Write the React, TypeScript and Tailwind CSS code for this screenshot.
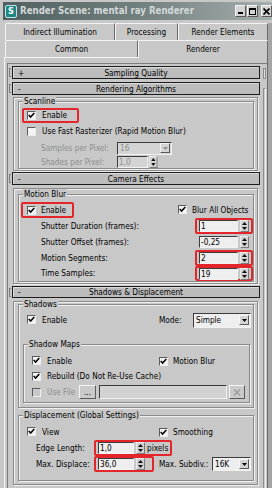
import React from 'react';

const sunken =
  'border border-t-[#3c3c3c] border-l-[#3c3c3c] border-r-[#f2f2f2] border-b-[#f2f2f2]';
const raised =
  'border border-t-[#f4f4f4] border-l-[#f4f4f4] border-r-[#5a5a5a] border-b-[#5a5a5a]';

function CheckBox({ checked = true, disabled = false }: { checked?: boolean; disabled?: boolean }) {
  return (
    <span
      className={`flex h-[9px] w-[9px] shrink-0 items-center justify-center border border-t-[#5c5c5c] border-l-[#5c5c5c] border-r-[#eeeeee] border-b-[#eeeeee] ${
        disabled ? 'bg-[#c8c8c8]' : 'bg-[#f3f3f3]'
      }`}
    >
      {checked && (
        <svg width="7" height="7" viewBox="0 0 7 7">
          <path d="M0.7 3.1 L2.6 5.1 L6.3 1.1" stroke="#000" strokeWidth="1.5" fill="none" />
        </svg>
      )}
    </span>
  );
}

function SpinArrows() {
  return (
    <span className="ml-[2px] flex h-[12px] w-[9px] shrink-0 flex-col items-center justify-center gap-[2px] border border-t-[#ececec] border-l-[#ececec] border-r-[#7a7a7a] border-b-[#7a7a7a] bg-[#d2d2d2]">
      <svg width="5" height="3" viewBox="0 0 5 3">
        <path d="M0 3 L2.5 0 L5 3Z" fill="#111" />
      </svg>
      <svg width="5" height="3" viewBox="0 0 5 3">
        <path d="M0 0 L5 0 L2.5 3Z" fill="#111" />
      </svg>
    </span>
  );
}

function Field({ value, className = '', disabled = false }: { value: string; className?: string; disabled?: boolean }) {
  return (
    <span
      className={`flex h-[12px] shrink-0 items-center pl-[1px] leading-[10px] ${sunken} ${
        disabled ? 'bg-[#d4d4d4] text-[#8e8e8e]' : 'bg-[#eeeeee]'
      } ${className}`}
    >
      {value}
    </span>
  );
}

function Dropdown({ value, className = '', disabled = false }: { value: string; className?: string; disabled?: boolean }) {
  return (
    <span
      className={`flex shrink-0 items-center ${sunken} ${disabled ? 'bg-[#d4d4d4] text-[#8e8e8e]' : 'bg-[#eeeeee]'} ${className}`}
    >
      <span className="flex-1 pl-[2px] leading-[10px]">{value}</span>
      <span className={`mr-[1px] flex h-[10px] w-[10px] items-center justify-center bg-[#d4d4d4] ${raised}`}>
        <svg width="5" height="3" viewBox="0 0 5 3">
          <path d="M0 0 L5 0 L2.5 3Z" fill={disabled ? '#8e8e8e' : '#000'} />
        </svg>
      </span>
    </span>
  );
}

function RolloutHeader({ sign, title, className = '' }: { sign: string; title: string; className?: string }) {
  return (
    <div className={`flex shrink-0 items-stretch ${className}`}>
      <div className="flex w-[4px] items-center pl-[1px]">
        <div className="h-[9px] w-[2px] border-l border-t border-b border-[#7c7c7c]" />
      </div>
      <div className="flex w-[248px] items-center border border-[#1c1c1c] bg-[#bcbcbc] shadow-[inset_1px_1px_0_#dadada]">
        <span className="w-[14px] pl-[5px] leading-[10px]">{sign}</span>
        <span className="flex-1 pr-[14px] text-center leading-[10px]">{title}</span>
      </div>
    </div>
  );
}

function Group({ label, className = '', children }: { label: string; className?: string; children: React.ReactNode }) {
  return (
    <div
      className={`relative flex flex-col border border-[#8a8a8a] shadow-[inset_1px_1px_0_#f0f0f0,1px_1px_0_#f0f0f0] ${className}`}
    >
      <span className="absolute left-[4px] top-[-6px] bg-[#c8c8c8] px-[1px] leading-[10px]">{label}</span>
      {children}
    </div>
  );
}

function Body({ className = '', children }: { className?: string; children: React.ReactNode }) {
  return (
    <div
      className={`ml-[5px] flex w-[245px] shrink-0 flex-col border border-[#8a8a8a] shadow-[inset_1px_1px_0_#efefef,1px_1px_0_#efefef] ${className}`}
    >
      {children}
    </div>
  );
}

const red = 'rounded-[2px] border-2 border-[#e3262b]';

export default function App() {
  return (
    <div className="relative h-[488px] w-[272px] overflow-hidden bg-[#c8c8c8] pt-[2px] font-['DejaVu_Sans_Condensed','Liberation_Sans',Arial,sans-serif] text-[8.2px] text-black">
      {/* title bar */}
      <div className="ml-[3px] flex h-[18px] items-center bg-gradient-to-r from-[#506060] via-[#727f7f] to-[#a6aeae] pl-[2px]">
        <span className="flex h-[13px] w-[12px] items-center justify-center rounded-[2px] border border-[#bfe6e6] bg-[#1f8688] text-[9px] font-bold leading-none text-white">
          S
        </span>
        <span className="ml-[3px] text-[9.6px] font-bold leading-none text-[#d2d8d8]">
          Render Scene: mental ray Renderer
        </span>
        <span className="ml-auto flex items-center">
          <span className={`flex h-[12px] w-[11px] items-end justify-center bg-[#d4d4d4] pb-[2px] ${raised}`}>
            <span className="h-[2px] w-[5px] bg-black" />
          </span>
          <span className={`ml-[1px] flex h-[12px] w-[11px] items-center justify-center bg-[#d4d4d4] ${raised}`}>
            <span className="h-[7px] w-[7px] border border-t-2 border-black" />
          </span>
          <span className={`ml-[3px] flex h-[12px] w-[11px] items-center justify-center bg-[#d4d4d4] ${raised}`}>
            <svg width="7" height="7" viewBox="0 0 7 7">
              <path d="M0.5 0.5 L6.5 6.5 M6.5 0.5 L0.5 6.5" stroke="#000" strokeWidth="1.6" />
            </svg>
          </span>
        </span>
      </div>

      <div className="mt-[3px] flex h-[465px]">
        <div className="w-[4px] shrink-0" />
        <div className="flex w-[264px] flex-col">
          {/* tabs */}
          <div className="flex h-[17px] pl-[1px]">
            <div className="flex w-[110px] items-center justify-center rounded-t-[2px] border-t border-l border-r border-t-[#f4f4f4] border-l-[#f4f4f4] border-r-[#6a6a6a]">
              Indirect Illumination
            </div>
            <div className="flex w-[63px] items-center justify-center rounded-t-[2px] border-t border-l border-r border-t-[#f4f4f4] border-l-[#f4f4f4] border-r-[#6a6a6a]">
              Processing
            </div>
            <div className="flex w-[90px] items-center justify-center rounded-t-[2px] border-t border-l border-r border-t-[#f4f4f4] border-l-[#f4f4f4] border-r-[#6a6a6a]">
              Render Elements
            </div>
          </div>
          <div className="flex h-[17px] pl-[1px]">
            <div className="flex w-[133px] items-center justify-center rounded-t-[2px] border-t border-l border-r border-t-[#f4f4f4] border-l-[#f4f4f4] border-r-[#6a6a6a]">
              Common
            </div>
            <div className="flex w-[130px] items-center justify-center rounded-t-[2px] border-t border-l border-r border-t-[#f4f4f4] border-l-[#f4f4f4] border-r-[#6a6a6a]">
              Renderer
            </div>
          </div>

          {/* tab page */}
          <div className="flex flex-1 flex-col border-l border-r border-l-[#f4f4f4] border-r-[#6a6a6a]">
            <div className="h-[1px] w-[134px] bg-[#f4f4f4]" />
            <div className="ml-[2px] mt-[5px] flex flex-1 border-l border-t border-[#7c7c7c]">
              {/* rollouts */}
              <div className="flex w-[253px] flex-col">
                <RolloutHeader sign="+" title="Sampling Quality" className="mt-[2px] h-[13px]" />
                <RolloutHeader sign="-" title="Rendering Algorithms" className="mt-[3px] h-[13px]" />

                <Body className="mt-[2px] pb-[1px]">
                  <Group label="Scanline" className="ml-[4px] mt-[3px] w-[236px] pt-[6px]">
                    <div className="flex h-[15px] items-center">
                      <div className={`ml-[3px] flex h-[15px] w-[57px] items-center gap-[6px] pl-[3px] ${red}`}>
                        <CheckBox />
                        <span>Enable</span>
                      </div>
                    </div>
                    <div className="flex h-[17px] items-center gap-[6px] pl-[8px]">
                      <CheckBox checked={false} />
                      <span>Use Fast Rasterizer (Rapid Motion Blur)</span>
                    </div>
                    <div className="flex h-[16px] items-center pl-[22px] text-[#8e8e8e]">
                      <span className="w-[76px]">Samples per Pixel:</span>
                      <Dropdown value="16" className="h-[13px] w-[55px]" disabled />
                    </div>
                    <div className="flex h-[12px] items-center pl-[22px] text-[#8e8e8e]">
                      <span className="w-[76px]">Shades per Pixel:</span>
                      <Field value="1,0" className="w-[31px]" disabled />
                      <span className="-ml-[1px] scale-x-90">
                        <SpinArrows />
                      </span>
                    </div>
                  </Group>
                </Body>

                <RolloutHeader sign="-" title="Camera Effects" className="mt-[1px] h-[13px]" />

                <Body className="mt-[3px] pb-[1px]">
                  <Group label="Motion Blur" className="ml-[4px] mt-[5px] w-[236px] pt-[7px]">
                    <div className="flex h-[16px] items-center">
                      <div className={`ml-[2px] flex h-[16px] w-[53px] items-center gap-[5px] pl-[4px] ${red}`}>
                        <CheckBox />
                        <span>Enable</span>
                      </div>
                      <div className="ml-[104px] flex items-center gap-[5px]">
                        <CheckBox />
                        <span>Blur All Objects</span>
                      </div>
                    </div>
                    <div className="flex h-[16px] items-center pl-[22px]">
                      <span className="w-[154px]">Shutter Duration (frames):</span>
                      <div className={`flex h-[16px] w-[58px] items-center pl-[2px] ${red}`}>
                        <Field value="1" className="w-[39px]" />
                        <SpinArrows />
                      </div>
                    </div>
                    <div className="flex h-[16px] items-center pl-[22px]">
                      <span className="w-[158px]">Shutter Offset (frames):</span>
                      <Field value="-0,25" className="w-[39px]" />
                      <SpinArrows />
                    </div>
                    <div className="flex h-[16px] items-center pl-[22px]">
                      <span className="w-[154px]">Motion Segments:</span>
                      <div className={`flex h-[16px] w-[58px] items-center pl-[2px] ${red}`}>
                        <Field value="2" className="w-[39px]" />
                        <SpinArrows />
                      </div>
                    </div>
                    <div className="flex h-[15px] items-center pl-[22px]">
                      <span className="w-[154px]">Time Samples:</span>
                      <div className={`flex h-[15px] w-[58px] items-center pl-[2px] ${red}`}>
                        <Field value="19" className="w-[39px]" />
                        <SpinArrows />
                      </div>
                    </div>
                  </Group>
                </Body>

                <RolloutHeader sign="-" title="Shadows & Displacement" className="mt-[2px] h-[12px]" />

                <Body className="mt-[3px] pb-[3px]">
                  <Group label="Shadows" className="ml-[4px] mt-[2px] w-[236px] pt-[7px] pb-[4px]">
                    <div className="flex h-[16px] items-center">
                      <div className="flex w-[140px] items-center gap-[6px] pl-[8px]">
                        <CheckBox />
                        <span>Enable</span>
                      </div>
                      <span className="w-[34px]">Mode:</span>
                      <Dropdown value="Simple" className="h-[15px] w-[58px]" />
                    </div>

                    <Group label="Shadow Maps" className="ml-[4px] mt-[16px] w-[227px] pt-[8px] pb-[2px]">
                      <div className="flex h-[16px] items-center">
                        <div className="flex w-[135px] items-center gap-[6px] pl-[8px]">
                          <CheckBox />
                          <span>Enable</span>
                        </div>
                        <CheckBox />
                        <span className="ml-[5px]">Motion Blur</span>
                      </div>
                      <div className="flex h-[15px] items-center gap-[6px] pl-[8px]">
                        <CheckBox />
                        <span>Rebuild (Do Not Re-Use Cache)</span>
                      </div>
                      <div className="flex h-[16px] items-center pl-[8px]">
                        <CheckBox checked={false} disabled />
                        <span className="ml-[6px] w-[32px] whitespace-nowrap text-[#8e8e8e]">Use File</span>
                        <span className={`flex h-[14px] w-[17px] items-center justify-center bg-[#cacaca] leading-none ${raised}`}>
                          ...
                        </span>
                        <span className={`ml-[3px] h-[14px] w-[128px] bg-[#d2d2d2] ${sunken}`} />
                        <span className={`ml-[2px] flex h-[14px] w-[16px] items-center justify-center bg-[#cacaca] ${raised}`}>
                          <svg width="8" height="7" viewBox="0 0 8 7">
                            <path d="M1 0.5 L7 6.5 M7 0.5 L1 6.5" stroke="#9a9a9a" strokeWidth="1.3" />
                          </svg>
                        </span>
                      </div>
                    </Group>
                  </Group>

                  <Group label="Displacement (Global Settings)" className="ml-[4px] mt-[7px] w-[236px] pt-[8px] pb-[8px]">
                    <div className="flex h-[16px] items-center">
                      <div className="flex w-[140px] items-center gap-[6px] pl-[8px]">
                        <CheckBox />
                        <span>View</span>
                      </div>
                      <CheckBox />
                      <span className="ml-[5px]">Smoothing</span>
                    </div>
                    <div className="flex h-[16px] items-center pl-[17px]">
                      <span className="w-[58px]">Edge Length:</span>
                      <div className={`flex h-[16px] w-[78px] items-center pl-[2px] ${red}`}>
                        <Field value="1,0" className="w-[36px]" />
                        <SpinArrows />
                        <span className="ml-[2px]">pixels</span>
                      </div>
                    </div>
                    <div className="flex h-[16px] items-center pl-[17px]">
                      <span className="w-[58px]">Max. Displace:</span>
                      <div className={`flex h-[16px] w-[60px] items-center pl-[2px] ${red}`}>
                        <Field value="36,0" className="w-[36px]" />
                        <SpinArrows />
                      </div>
                      <span className="ml-[5px] w-[53px]">Max. Subdiv.:</span>
                      <Dropdown value="16K" className="h-[14px] w-[39px]" />
                    </div>
                  </Group>
                </Body>
              </div>

              {/* rollout scroll bar */}
              <div className="flex w-[6px] flex-col items-center pl-[1px]">
                <div className="mt-[4px] h-[11px] w-[3px] border border-[#8c8c8c] bg-[#dcdcdc]" />
                <div className="mt-[9px] w-[3px] flex-1 border-l border-r border-t border-l-[#8c8c8c] border-t-[#8c8c8c] border-r-[#f0f0f0] bg-[#c8c8c8]" />
              </div>
            </div>
          </div>
        </div>
        <div className="w-[4px] shrink-0 bg-[#a4a4a4]" />
      </div>
    </div>
  );
}
